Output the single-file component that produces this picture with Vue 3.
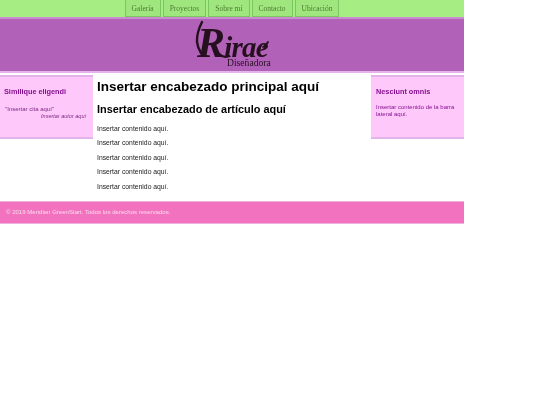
<script setup>
const links = ['Galería', 'Proyectos', 'Sobre mí', 'Contacto', 'Ubicación']
const paragraphs = Array(5).fill('Insertar contenido aquí.')
</script>

<template>
  <div class="page">
    <nav class="nav">
      <a v-for="l in links" :key="l" class="link">{{ l }}</a>
    </nav>
    <header class="header">
      <div class="logo">
        <svg class="swash" viewBox="0 0 80 50" aria-hidden="true">
          <path d="M9 2 C6 8 3.5 14 4 22 C4.5 26 6 30 8 33" fill="none" stroke="#26101f" stroke-width="2.4" stroke-linecap="round" />
          <path d="M21 27 C25 34 30 39 36 36" fill="none" stroke="#26101f" stroke-width="2.2" stroke-linecap="round" />
          <path d="M70 27 C72 26 74 24 75 22" fill="none" stroke="#26101f" stroke-width="1.8" stroke-linecap="round" />
        </svg>
        <span class="brand"><span class="cap">R</span>irae</span>
        <span class="role">Diseñadora</span>
      </div>
    </header>
    <div class="columns">
      <aside class="side left">
        <h3>Similique eligendi</h3>
        <p class="quote">"Insertar cita aquí"</p>
        <p class="author">Insertar autor aquí</p>
      </aside>
      <main class="main">
        <h1>Insertar encabezado principal aquí</h1>
        <h2>Insertar encabezado de artículo aquí</h2>
        <p v-for="(p, i) in paragraphs" :key="i">{{ p }}</p>
      </main>
      <aside class="side right">
        <h3>Nesciunt omnis</h3>
        <p class="note">Insertar contenido de la barra lateral aquí.</p>
      </aside>
    </div>
    <footer class="footer">© 2019 Meridien GreenStart. Todos los derechos reservados.</footer>
  </div>
</template>

<style>
html, body { margin: 0; background: #fff; }
</style>

<style scoped>
.page {
  width: 464px;
  font-family: "Liberation Sans", Arial, sans-serif;
  filter: blur(0.45px);
}
.nav {
  display: flex;
  justify-content: center;
  gap: 2px;
  height: 17px;
  background: #a6ee84;
}
.link {
  box-sizing: border-box;
  height: 17px;
  padding: 0 6px;
  display: flex;
  align-items: center;
  font: 7.5px "Liberation Serif", serif;
  color: #4c7a33;
  background: #a0e67e;
  border: 1px solid #7cc661;
  border-top: 0;
}
.header {
  box-sizing: border-box;
  height: 56px;
  display: flex;
  justify-content: center;
  background: #b261b8;
  border-top: 2px solid #c98ad0;
  border-bottom: 2px solid #e2b4ea;
}
.logo {
  position: relative;
  width: 80px;
  height: 52px;
  left: 1px;
}
.swash {
  position: absolute;
  left: 0;
  top: 1px;
  width: 80px;
  height: 50px;
}
.brand {
  position: absolute;
  left: 4px;
  top: 18px;
  font: italic bold 29px/20px "Liberation Serif", serif;
  letter-spacing: -0.8px;
  color: #26101f;
}
.cap {
  font-size: 42px;
  line-height: 0;
}
.role {
  position: absolute;
  left: 34px;
  top: 39px;
  font: 9.6px/10px "Liberation Serif", serif;
  color: #26101f;
}
.columns {
  display: flex;
  align-items: flex-start;
  margin-top: 2px;
}
.side {
  box-sizing: border-box;
  width: 93px;
  height: 64px;
  background: #ffc8fb;
  border-top: 2px solid #e2b4ea;
  border-bottom: 2px solid #e2b4ea;
  color: #8a1b8f;
}
.left { padding: 10px 4px 0; }
.right { padding: 10px 5px 0; }
.side h3 {
  margin: 0;
  font-size: 7.3px;
  line-height: 10px;
  font-weight: bold;
  color: #85108f;
}
.quote {
  margin: 9px 0 0 1px;
  font-size: 6px;
  line-height: 7px;
  color: #7a2a80;
}
.author {
  margin: 0;
  padding-right: 3px;
  text-align: right;
  font-size: 5.5px;
  line-height: 7px;
  font-style: italic;
  color: #7a2a80;
}
.note {
  margin: 7px 0 0;
  font-size: 6px;
  line-height: 6.6px;
  color: #85108f;
}
.main {
  flex: 1;
  box-sizing: border-box;
  padding: 3px 4px 0;
  height: 126px;
  color: #000;
}
.main h1 {
  margin: 0;
  font-size: 13.5px;
  line-height: 18px;
}
.main h2 {
  margin: 6px 0 0;
  font-size: 10.9px;
  line-height: 14px;
}
.main p {
  margin: 0 0 6px;
  font-size: 6.8px;
  line-height: 8.4px;
  color: #222;
}
.main h2 + p { margin-top: 9px; }
.footer {
  box-sizing: border-box;
  height: 23px;
  display: flex;
  align-items: center;
  padding: 0 0 1px 6px;
  font-size: 6.06px;
  color: #fbdcf0;
  background: #f272bf;
  border-top: 1px solid #eeb2dc;
  border-bottom: 1px solid #eeb2dc;
}
</style>
